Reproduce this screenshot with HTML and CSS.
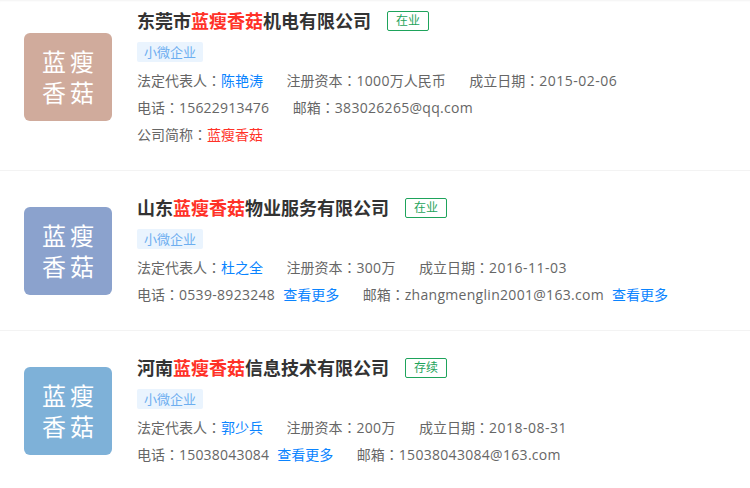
FILE: index.html
```html
<!DOCTYPE html>
<html>
<head>
  <meta charset="UTF-8" />
  <title>蓝瘦香菇 - 企业搜索</title>
  <link rel="stylesheet" href="styles.css">
</head>
<body>
  <div class="list">
    <div class="item">
      <div class="logo logo-brown">蓝瘦<br>香菇</div>
      <div class="info">
        <div class="title">
          <h3>东莞市<em>蓝瘦香菇</em>机电有限公司</h3>
          <span class="status">在业</span>
        </div>
        <span class="chip">小微企业</span>
        <div class="line">
          <span>法定代表人<i>：</i><a href="#">陈艳涛</a></span>
          <span>注册资本<i>：</i><b>1000</b>万人民币</span>
          <span>成立日期<i>：</i><b class="date">2015-02-06</b></span>
        </div>
        <div class="line">
          <span>电话<i>：</i><b class="phone">15622913476</b></span>
          <span>邮箱<i>：</i><b>383026265@qq.com</b></span>
        </div>
        <div class="line">
          <span>公司简称<i>：</i><em>蓝瘦香菇</em></span>
        </div>
      </div>
    </div>

    <div class="item">
      <div class="logo logo-blue">蓝瘦<br>香菇</div>
      <div class="info">
        <div class="title">
          <h3>山东<em>蓝瘦香菇</em>物业服务有限公司</h3>
          <span class="status">在业</span>
        </div>
        <span class="chip">小微企业</span>
        <div class="line">
          <span>法定代表人<i>：</i><a href="#">杜之全</a></span>
          <span>注册资本<i>：</i><b>300</b>万</span>
          <span>成立日期<i>：</i><b class="date">2016-11-03</b></span>
        </div>
        <div class="line">
          <span>电话<i>：</i><b>0539-8923248</b><a class="more" href="#">查看更多</a></span>
          <span>邮箱<i>：</i><b>zhangmenglin2001@163.com</b><a class="more" href="#">查看更多</a></span>
        </div>
      </div>
    </div>

    <div class="item">
      <div class="logo logo-sky">蓝瘦<br>香菇</div>
      <div class="info">
        <div class="title">
          <h3>河南<em>蓝瘦香菇</em>信息技术有限公司</h3>
          <span class="status">存续</span>
        </div>
        <span class="chip">小微企业</span>
        <div class="line">
          <span>法定代表人<i>：</i><a href="#">郭少兵</a></span>
          <span>注册资本<i>：</i><b>200</b>万</span>
          <span>成立日期<i>：</i><b class="date">2018-08-31</b></span>
        </div>
        <div class="line">
          <span>电话<i>：</i><b class="phone">15038043084</b><a class="more" href="#">查看更多</a></span>
          <span>邮箱<i>：</i><b>15038043084@163.com</b></span>
        </div>
      </div>
    </div>
  </div>
</body>
</html>
```

FILE: styles.css
```css
html, body {
  height: 100%;
  overflow: hidden;
}
body {
  margin: 0;
  background: #fff;
  color: #666;
  font-family: "Open Sans", "Noto Sans CJK SC", sans-serif;
  font-size: 14px;
  box-shadow: inset 0 2px 2px -1px rgba(0, 0, 0, 0.05);
}
.list {
  margin-top: -16px;
}
.item {
  display: flex;
  align-items: center;
  padding: 22px 24px;
  border-bottom: 1px solid #f3f3f3;
}
.logo {
  flex: none;
  width: 88px;
  height: 88px;
  margin-right: 25px;
  padding-left: 4px;
  box-sizing: border-box;
  border-radius: 6px;
  color: #fff;
  font-size: 24px;
  line-height: 31px;
  letter-spacing: 4px;
  text-align: center;
  display: flex;
  align-items: center;
  justify-content: center;
}
.logo-brown { background: #d0ab9c; }
.logo-blue { background: #8ba2cd; }
.logo-sky { background: #7eb1d8; }
.title {
  display: flex;
  align-items: center;
  height: 30px;
  margin-bottom: 6px;
}
h3 {
  margin: 0 16px 0 0;
  color: #333;
  font-size: 18px;
  font-weight: bold;
  line-height: 30px;
}
em {
  color: #ff3127;
  font-style: normal;
}
.status {
  height: 20px;
  padding: 0 8px;
  border: 1px solid #1ea35b;
  border-radius: 2px;
  color: #1ea35b;
  font-size: 12px;
  line-height: 18px;
  box-sizing: border-box;
}
.chip {
  display: inline-block;
  height: 20px;
  padding: 0 7px;
  border-radius: 2px;
  background: #eaf4fe;
  color: #6daef0;
  font-size: 13px;
  line-height: 20px;
  vertical-align: top;
  margin-bottom: 5px;
}
.line {
  display: flex;
  gap: 23.5px;
  line-height: 27px;
  white-space: nowrap;
}
/* full-width colon sits centred in its box */
.line i {
  font-family: "Noto Sans CJK TC", sans-serif;
  font-style: normal;
}
.line b {
  font-weight: normal;
  letter-spacing: 0.3px;
}
.line .date {
  letter-spacing: 0.5px;
}
.line .phone {
  letter-spacing: 0.2px;
}
a {
  color: #0a84ff;
  text-decoration: none;
}
.more {
  margin-left: 8px;
}
```
